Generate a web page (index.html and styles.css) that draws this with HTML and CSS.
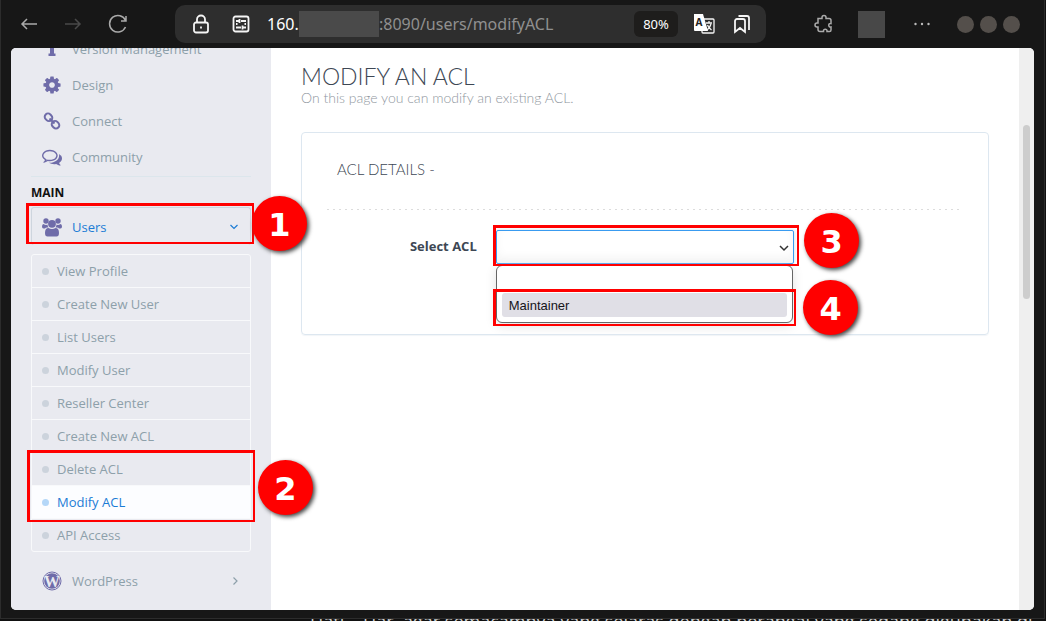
FILE: index.html
```html
<!DOCTYPE html>
<html lang="en">
<head>
<meta charset="utf-8">
<title>Modify ACL</title>
<link rel="stylesheet" href="styles.css">
</head>
<body>
<div class="window">
  <header class="toolbar">
    <div class="nav">
      <button class="tool back" aria-label="Back"><svg width="18" height="18" viewBox="0 0 18 18"><path d="M17 9H2M7 4L2 9l5 5"/></svg></button>
      <button class="tool forward" aria-label="Forward"><svg width="18" height="18" viewBox="0 0 18 18"><path d="M1 9h15M11 4l5 5-5 5"/></svg></button>
      <button class="tool reload" aria-label="Reload"><svg width="20" height="20" viewBox="0 0 20 20"><path d="M17.500 13A8.300 8.300 0 1 1 17.500 6.500M18 2v5h-5"/></svg></button>
    </div>
    <div class="address">
      <button class="tool bright" aria-label="Connection secure"><svg width="18" height="20" viewBox="0 0 18 20"><rect x="2" y="8.500" width="14" height="10" rx="2"/><path d="M5 8.500V5.500a4 4 0 0 1 8 0v3"/><path d="M9 12.500v2"/></svg></button>
      <button class="tool bright" aria-label="Permissions"><svg width="18" height="18" viewBox="0 0 18 18"><rect x="1.500" y="1.500" width="15" height="15" rx="2"/><path d="M4 6h3M9 6h5M7.500 4v4M4 9h1.500M12.500 9H14M4 12.500h5M11 12.500h3M10.500 10.500v4"/></svg></button>
      <div class="url"><span class="host">160.</span><span class="redacted"></span><span>:8090/users/modifyACL</span></div>
      <button class="zoom">80%</button>
      <button class="tool translate" aria-label="Translate page"><svg width="22" height="22" viewBox="0 0 22 22"><rect x="9" y="6" width="12" height="14" rx="1" class="line"/><path d="M1 1h9l5 17H2a1 1 0 0 1-1-1z" class="sheet"/><text x="2.500" y="12.500">A</text><path d="M13 10h6M16 8v2M18 11q-1 4-4 6M14.500 12q1 3 4 5" class="line"/></svg></button>
      <button class="tool bright" aria-label="Bookmarks"><svg width="18" height="20" viewBox="0 0 18 20"><path d="M2 18V7a2 2 0 0 1 2-2h6a2 2 0 0 1 2 2v11l-5-4zM5.500 2H14a2 2 0 0 1 2 2v12"/></svg></button>
    </div>
    <div class="extras">
      <button class="tool" aria-label="Extensions"><svg width="20" height="20" viewBox="0 0 20 20"><path d="M4 4.500h4V3.500a2 2 0 0 1 4 0v1h3a2 2 0 0 1 2 2v3c-3-.5-3 4 0 3.500v3a1.500 1.500 0 0 1-1.500 1.500H13c.5-3-4-3-3.500 0H6a2 2 0 0 1-2-2V13H3a2 2 0 0 1 0-4h1z"/></svg></button>
      <span class="block"></span>
      <button class="tool menu" aria-label="Menu"><svg width="18" height="18" viewBox="0 0 18 18"><circle cx="2.500" cy="9" r="1.200"/><circle cx="9" cy="9" r="1.200"/><circle cx="15.500" cy="9" r="1.200"/></svg></button>
      <span class="controls"><i></i><i></i><i></i></span>
    </div>
  </header>

  <div class="page">
    <nav class="sidebar">
      <ul class="links">
        <li><a href="#"><svg class="icon" viewBox="0 0 20 20"><circle cx="10" cy="3" r="2.300"/><path d="M6.500 6h5.500v8.500h1.500V17h-7v-2.500H8V8.500H6.500z"/></svg>Version Management</a></li>
        <li><a href="#"><svg class="icon" viewBox="0 0 1792 1792"><path d="M1152 896q0-106-75-181t-181-75-181 75-75 181 75 181 181 75 181-75 75-181zm512-109v222q0 12-8 23t-20 13l-185 28q-19 54-39 91 35 50 107 138 10 12 10 25t-9 23q-27 37-99 108t-94 71q-12 0-26-9l-138-108q-44 23-91 38-16 136-29 186-7 28-36 28h-222q-14 0-24.500-8.500t-11.500-21.500l-28-184q-49-16-90-37l-141 107q-10 9-25 9-14 0-25-11-126-114-165-168-7-10-7-23 0-12 8-23 15-21 51-66.500t54-70.500q-27-50-41-99l-183-27q-13-2-21-12.500t-8-23.500v-222q0-12 8-23t19-13l186-28q14-46 39-92-40-57-107-138-10-12-10-24 0-10 9-23 26-36 98.500-107.500t94.500-71.500q13 0 26 10l138 107q44-23 91-38 16-136 29-186 7-28 36-28h222q14 0 24.500 8.500t11.500 21.500l28 184q49 16 90 37l142-107q9-9 24-9 13 0 25 10 129 119 165 170 7 8 7 22 0 12-8 23-15 21-51 66.500t-54 70.500q26 50 41 98l183 28q13 2 21 12.500t8 23.500z"/></svg>Design</a></li>
        <li><a href="#"><svg class="icon chain" viewBox="0 0 20 20"><rect x="2.500" y="3" width="8" height="6.600" rx="3.300" transform="rotate(45 6.500 6.300)"/><rect x="9.500" y="10.400" width="8" height="6.600" rx="3.300" transform="rotate(45 13.500 13.700)"/><path d="M7.500 7.500l5 5"/></svg>Connect</a></li>
        <li><a href="#"><svg class="icon" viewBox="0 0 1792 1792"><path d="M704 384q-153 0-286 52t-211.500 141-78.500 191q0 82 53 158t149 132l97 56-35 84q34-20 62-39l44-31 53 10q78 14 153 14 153 0 286-52t211.500-141 78.500-191-78.500-191-211.500-141-286-52zm0-128q191 0 353.500 68.500t256.500 186.500 94 257-94 257-256.500 186.500-353.500 68.500q-86 0-176-16-124 88-278 128-36 9-86 16h-3q-11 0-20.500-8t-11.500-21q-1-3-1-6.500t.5-6.500 2-6l2.500-5 3.500-5.500 4-5 4.500-5 4-4.500q5-6 23-25t26-29.500 22.500-29 25-38.500 20.500-44q-124-72-195-177t-71-224q0-139 94-257t256.500-186.500 353.500-68.500zm822 1169q10 24 20.500 44t25 38.500 22.500 29 26 29.500 23 25q1 1 4 4.500t4.500 5 4 5 3.500 5.500l2.500 5 2 6 .5 6.500-1 6.500q-3 14-13 22t-22 7q-50-7-86-16-154-40-278-128-90 16-176 16-271 0-472-132 58 4 88 4 161 0 309-45t264-129q125-92 192-212t67-254q0-77-23-152 129 71 204 178t75 230q0 120-71 224.500t-195 176.500z"/></svg>Community</a></li>
      </ul>
      <h2 class="section">MAIN</h2>
      <div class="group">
        <a class="open" href="#"><svg class="icon" viewBox="0 0 20 20"><circle cx="4" cy="4" r="2.700"/><circle cx="16" cy="4" r="2.700"/><circle cx="10" cy="6.800" r="3.900"/><path d="M5 10.500q-1.500 0-2 1H1.500Q0 11.500 0 9.500 0 7 1.500 7q2.500 1.600 4 .5Q5.500 9 6.500 10.500zM15 10.500q1.500 0 2 1h1.500q1.500 0 1.500-2Q20 7 18.500 7q-2.500 1.600-4 .5 0 1.500-1 3zM6.500 11q3.500 2 7 0 3.500 0 3.500 5 0 3.500-2.500 3.500h-9Q3 19.500 3 16q0-5 3.500-5z"/></svg>Users<svg class="chevron" viewBox="0 0 10 10"><path d="M1.500 3L5 6.500 8.500 3"/></svg></a>
        <span class="mark mark-users"></span><span class="badge badge-one">1</span>
      </div>
      <ul class="submenu">
        <li><a href="#">View Profile</a></li>
        <li><a href="#">Create New User</a></li>
        <li><a href="#">List Users</a></li>
        <li><a href="#">Modify User</a></li>
        <li><a href="#">Reseller Center</a></li>
        <li><a href="#">Create New ACL</a></li>
        <li><a href="#">Delete ACL</a></li>
        <li class="current"><a href="#">Modify ACL</a><span class="mark mark-acl"></span><span class="badge badge-two">2</span></li>
        <li><a href="#">API Access</a></li>
      </ul>
      <ul class="links">
        <li><a href="#"><svg class="icon wordpress" viewBox="0 0 20 20"><circle cx="10" cy="10" r="9" class="ring"/><circle cx="10" cy="10" r="7.800"/><text x="10" y="16" text-anchor="middle">W</text></svg>WordPress<svg class="chevron" viewBox="0 0 10 10"><path d="M3.500 1.500L7 5 3.500 8.500"/></svg></a></li>
      </ul>
    </nav>

    <main class="content">
      <h1 class="title">MODIFY AN ACL</h1>
      <p class="intro">On this page you can modify an existing ACL.</p>
      <section class="card">
        <h3 class="card-title">ACL DETAILS -</h3>
        <form class="form">
          <label for="acl">Select ACL</label>
          <div class="field">
            <select id="acl"><option></option><option>Maintainer</option></select>
            <svg class="arrow" viewBox="0 0 10 10"><path d="M1 3l4 4 4-4"/></svg>
            <ul class="options" role="listbox" aria-label="Select ACL">
              <li role="option"></li>
              <li role="option" class="hover">Maintainer</li>
            </ul>
            <span class="mark mark-select"></span><span class="badge badge-three">3</span>
            <span class="mark mark-option"></span><span class="badge badge-four">4</span>
          </div>
        </form>
      </section>
    </main>
    <div class="scrollbar"><span class="thumb"></span></div>
  </div>
</div>
<div class="behind">Hati... Har, agar semacamnya yang selaras dengan perangai yang sedang digunakan di</div>
</body>
</html>
```
FILE: styles.css
```css
* { box-sizing: border-box; }
body {
  margin: 0;
  height: 100vh;
  display: flex;
  flex-direction: column;
  overflow: hidden;
  background: #111;
  font: 13px/20px "Open Sans", "Noto Sans", sans-serif;
}
ul { list-style: none; margin: 0; padding: 0; }
a { color: inherit; text-decoration: none; }
button { border: 0; padding: 0; background: none; font: inherit; color: inherit; }
svg { display: block; flex: none; }

.window {
  flex: 1;
  min-height: 0;
  display: flex;
  flex-direction: column;
  margin-right: 1px;
  padding: 0 10px 8px;
  border: 1px solid #2c2c2c;
  border-top: 0;
  background: #171717;
}
.behind {
  height: 2px;
  overflow: hidden;
  padding-left: 310px;
  white-space: nowrap;
  font-size: 18px;
  line-height: 4px;
  color: #ccc;
}

.toolbar { display: flex; align-items: center; height: 48px; flex: none; }
.nav { display: flex; align-items: center; gap: 26px; width: 164px; padding-left: 9px; }
.tool { display: flex; color: #aaa; }
.tool svg { fill: none; stroke: currentColor; stroke-width: 1.500; }
.tool.forward { color: #4a4a4a; }
.tool.bright { color: #f5f5f5; }
.tool.bright svg { stroke-width: 1.800; }
.address {
  flex: 1;
  display: flex;
  align-items: center;
  height: 38px;
  padding: 0 15px 0 17px;
  border-radius: 10px;
  background: #2e2e2e;
}
.address .tool + .tool { margin-left: 22px; }
.url {
  flex: 1;
  display: flex;
  align-items: center;
  margin-left: 17px;
  font: 16px/26px "Noto Sans", sans-serif;
  color: #909090;
}
.host { width: 32px; color: #fff; }
.redacted { width: 80px; height: 26px; background: #4a4a4a; }
.zoom {
  width: 44px;
  height: 26px;
  margin-right: 15px;
  border-radius: 6px;
  background: #1e1d1c;
  color: #fff;
  font: 13px/26px "Noto Sans", sans-serif;
}
.translate { color: #f5f5f5; }
.translate .sheet { fill: #fff; stroke: none; }
.translate .line { stroke-width: 1.300; }
.translate text { fill: #222; stroke: none; font: bold 10px "Noto Sans", sans-serif; }
.address .translate + .tool { margin-left: 18px; }
.extras { display: flex; align-items: center; width: 268px; padding-left: 48px; }
.block { width: 27px; height: 27px; margin: 0 28px 0 24px; background: #484848; }
.menu circle { fill: #bbb; stroke: none; }
.controls { display: flex; gap: 6px; margin-left: 26px; }
.controls i { width: 17px; height: 17px; border-radius: 50%; background: #544f4b; }

.page {
  flex: 1;
  min-height: 0;
  display: flex;
  overflow: hidden;
  border-radius: 5px;
  background: #fff;
}
.sidebar {
  position: relative;
  z-index: 1;
  width: 260px;
  flex: none;
  margin-top: -17px;
  padding: 0 20px;
  background: #e9eaf0;
  color: #8da0aa;
}
.links a, .group a {
  display: flex;
  align-items: center;
  gap: 10px;
  height: 36px;
  padding: 0 11px;
}
.icon { width: 20px; height: 20px; fill: #6f6ca9; }
.chain { fill: none; stroke: #6f6ca9; stroke-width: 2; }
.wordpress .ring { fill: none; stroke: #6f6ca9; stroke-width: 1; }
.wordpress text { fill: #e9eaf0; font: bold 16px "Liberation Serif", serif; }
.chevron { width: 10px; height: 10px; margin-left: auto; fill: none; stroke: currentColor; stroke-width: 1.200; }
.section {
  margin: 1px 0 0;
  padding: 6px 0 4px;
  border-top: 1px solid #dce6ec;
  font-size: 12px;
  line-height: 20px;
  color: #111;
}
.group { position: relative; color: #1c7cd5; }
.group a { height: 38px; border: 1px solid #ced5de; border-bottom: 0; border-radius: 3px; padding: 0 10px; }
.group .chevron { margin-right: 1px; }
.submenu { margin: 9px 0 11px; border: 1px solid #f8f9fb; border-radius: 3px; }
.submenu li { position: relative; }
.submenu li + li { border-top: 1px solid #f8f9fb; }
.submenu a { display: flex; align-items: center; gap: 8px; height: 32px; padding-left: 10px; }
.submenu a::before { content: ""; width: 7px; height: 7px; border-radius: 50%; background: #ccd3dc; }
.submenu .current { background: #fcfdff; color: #1c7cd5; }
.submenu .current a::before { background: #b4d7f8; }

.content { flex: 1; padding: 15px 30px; color: #3d4754; }
.title, .intro, .card-title { font-family: Lato, sans-serif; font-weight: 300; margin: 0; }
.title { font-size: 23px; line-height: 26px; }
.intro { font-size: 14px; line-height: 18px; color: #9097a0; }
.card {
  margin-top: 25px;
  height: 203px;
  padding: 24px 25px;
  border: 1px solid #dde7f0;
  border-radius: 4px;
  box-shadow: 0 1px 1px #f2f5f8;
}
.card-title {
  padding: 2px 10px 31px;
  font-size: 15px;
  line-height: 20px;
  background: repeating-linear-gradient(90deg, #dcdcdc 0 2px, transparent 2px 6px) bottom / 100% 1px no-repeat;
}
.form {
  display: grid;
  grid-template-columns: 150fr 299fr 150fr;
  gap: 19px;
  align-items: center;
  padding-top: 20px;
}
.form label { padding-bottom: 2px; text-align: right; font-weight: 700; }
.field { position: relative; }
.field select {
  display: block;
  width: 100%;
  height: 34px;
  appearance: none;
  border: 1px solid #399bf0;
  border-radius: 2px;
  outline: 0;
  background: #fff;
  box-shadow: 0 0 4px #d5dde5, inset 0 -6px 10px #f5f5f5;
}
.arrow { position: absolute; right: 5px; top: 13px; width: 10px; height: 10px; fill: none; stroke: #333; stroke-width: 1.500; }
.options {
  position: absolute;
  top: 35px;
  left: 0;
  right: 1px;
  padding: 3px 5px 5px;
  border: 1px solid #666;
  border-radius: 6px;
  background: #fff;
  box-shadow: 0 3px 12px #e2e2e2;
  font: 13px/26px "Liberation Sans", Arial, sans-serif;
  color: #15141a;
}
.options li { height: 24px; padding: 0 7px; border-radius: 3px; }
.options .hover { background: #e0dfe6; }

.scrollbar { width: 15px; padding: 77px 4px 0; background: #efefef; }
.thumb { display: block; width: 7px; height: 174px; border-radius: 4px; background: #cdcdcd; }

.mark { position: absolute; border: solid #f00; border-width: 3px 2px 2px 3px; pointer-events: none; }
.mark-users { top: -4px; left: -5px; right: -3px; height: 41px; }
.mark-acl { top: -36px; left: -5px; right: -5px; height: 72px; z-index: 1; }
.mark-select { top: -5px; left: -3px; right: -5px; height: 41px; }
.mark-option { top: 59px; left: -3px; right: -2px; height: 37px; }
.badge {
  position: absolute;
  width: 55px;
  height: 55px;
  border-radius: 50%;
  background: #f00;
  box-shadow: 2px 2px 4px #444;
  color: #fff;
  font: bold 32px/58px "DejaVu Sans", sans-serif;
  text-align: center;
}
.badge-one { top: -11px; left: 221px; }
.badge-two { top: -26px; left: 226px; }
.badge-three { top: -17px; left: calc(100% + 10px); }
.badge-four { top: 50px; left: calc(100% + 9px); }
```
